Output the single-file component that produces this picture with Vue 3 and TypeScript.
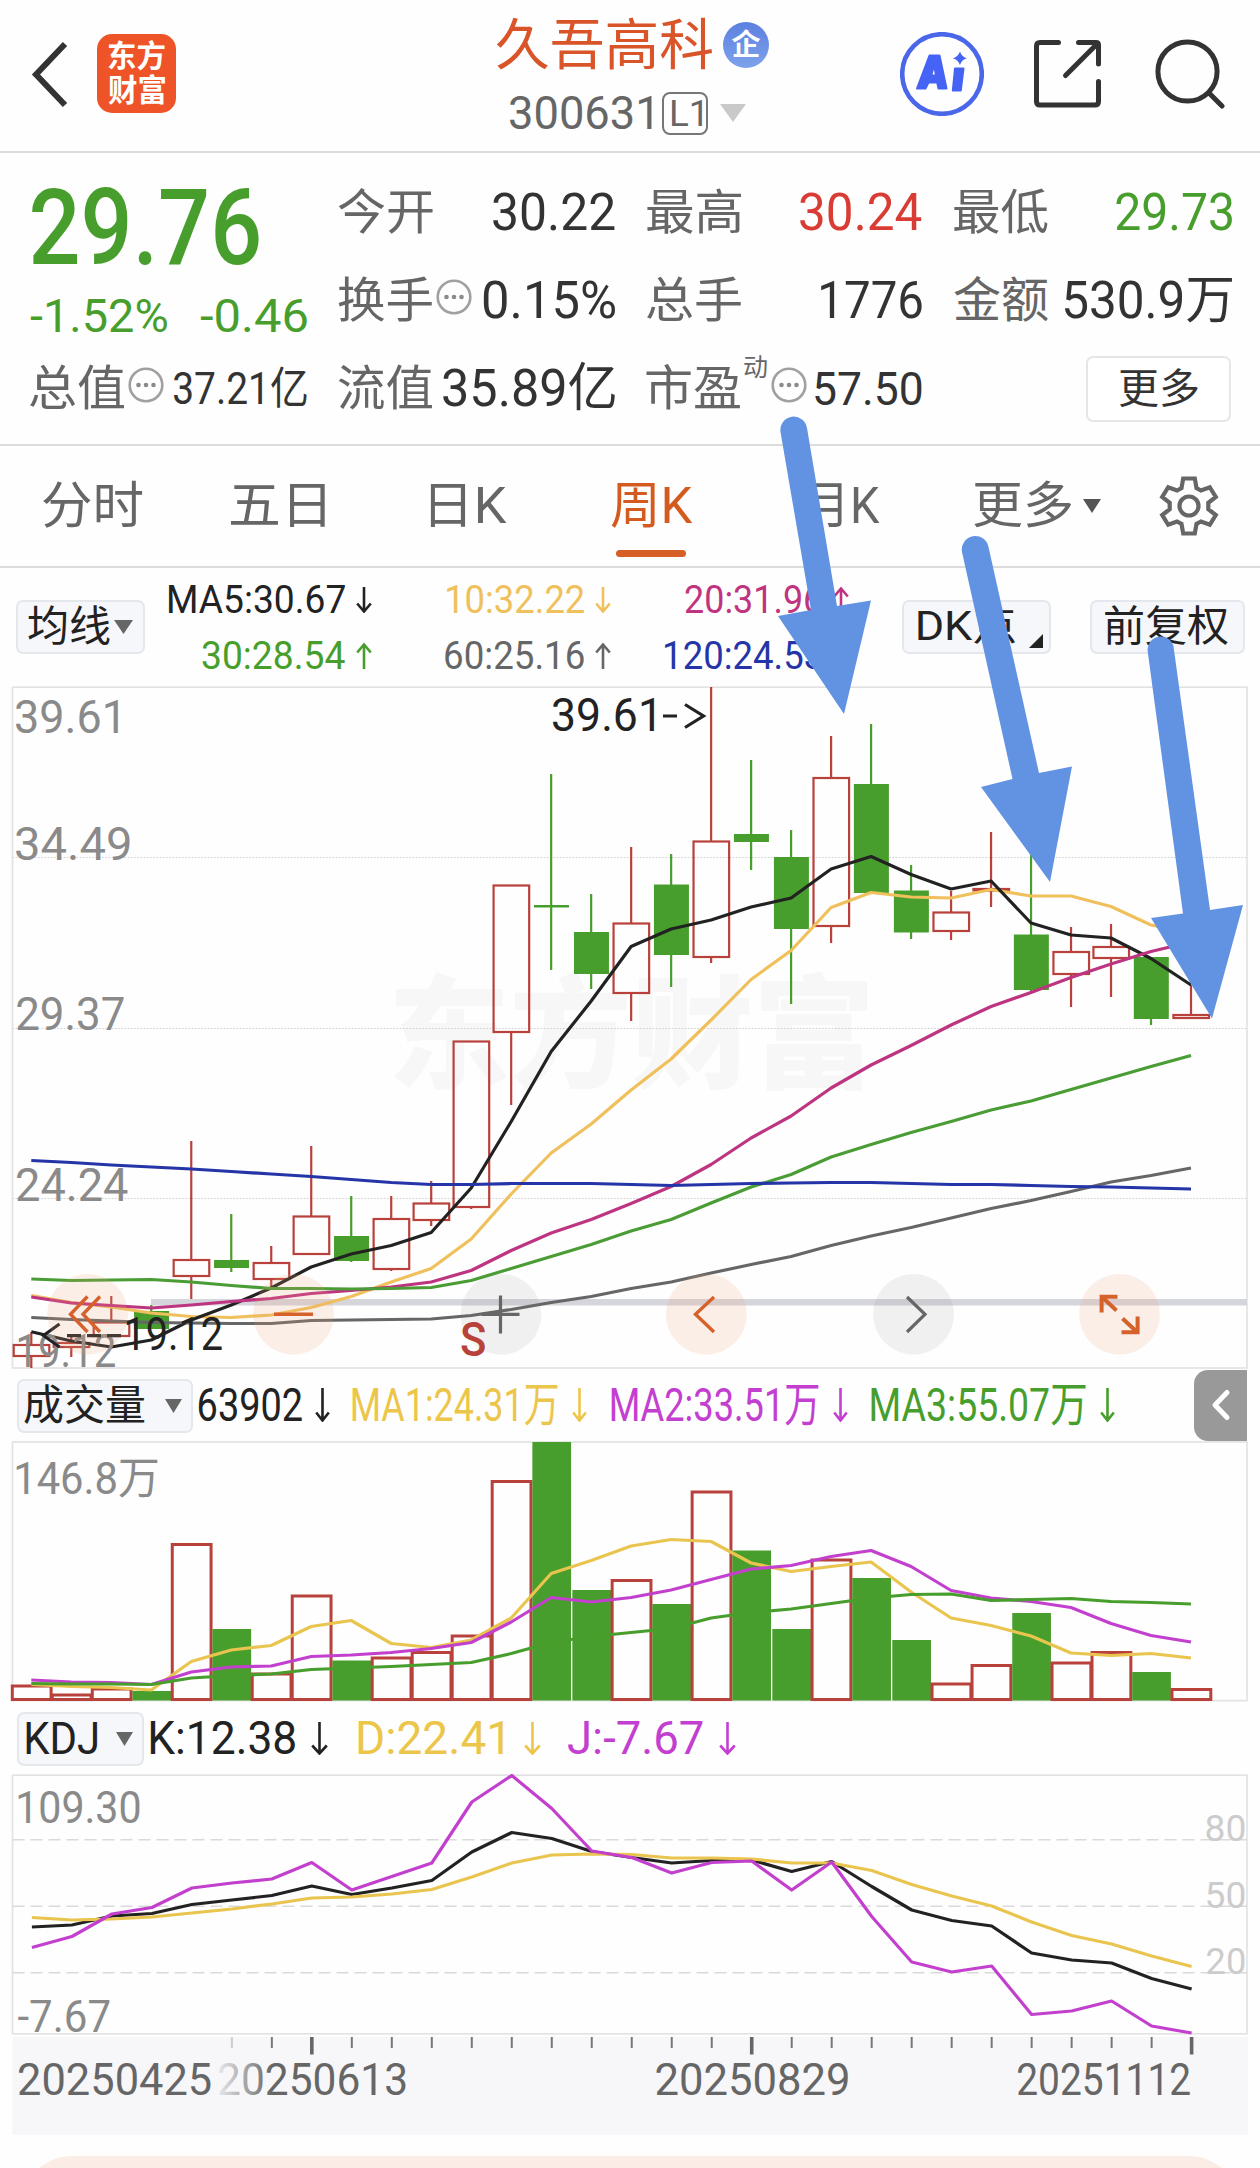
<script setup lang="ts">
import { h } from 'vue'
import type { Directive, FunctionalComponent } from 'vue'

/* ---------- text fitting: squeezes a label to a given ink width ---------- */
type Spot = { x: number; y: number; w: number }
const pen = document.createElement('canvas').getContext('2d')!

function ink(el: Element) {
  const cs = getComputedStyle(el)
  pen.font = `${cs.fontWeight} ${cs.fontSize} ${cs.fontFamily}`
  const m = pen.measureText((el.textContent ?? '').trim())
  return { left: m.actualBoundingBoxLeft, width: m.actualBoundingBoxLeft + m.actualBoundingBoxRight, advance: m.width }
}

const vFit: Directive<HTMLElement, number> = {
  mounted(el, { value }) {
    const m = ink(el)
    const s = value / m.width
    el.style.transform = `translateX(${m.left * s}px) scaleX(${s})`
    el.style.marginRight = `${value - m.advance}px`
  },
}

const vSpot: Directive<SVGTextElement, Spot> = {
  mounted(el, { value }) {
    const m = ink(el)
    const s = value.w / m.width
    el.setAttribute('transform', `translate(${value.x + m.left * s} ${value.y}) scale(${s} 1)`)
  },
}

/* ---------- small glyphs ---------- */
const Trend: FunctionalComponent<{ up?: boolean; w: number; t: number }> = (p) => {
  const m = p.w / 2
  const d = p.up
    ? `M${m} ${p.t}V1.5M1.2 9.5L${m} 1.5L${p.w - 1.2} 9.5`
    : `M${m} 0V${p.t - 1.5}M1.2 ${p.t - 9.5}L${m} ${p.t - 1.5}L${p.w - 1.2} ${p.t - 9.5}`
  return h('svg', { width: p.w, height: p.t, viewBox: `0 0 ${p.w} ${p.t}`, style: { flex: 'none' } }, [
    h('path', { d, fill: 'none', stroke: 'currentColor', 'stroke-width': 2.6 }),
  ])
}
Trend.props = { up: Boolean, w: Number, t: Number }

const Dots: FunctionalComponent = () =>
  h('svg', { width: 36, height: 36, viewBox: '0 0 36 36', style: { flex: 'none' } }, [
    h('circle', { cx: 18, cy: 18, r: 16.3, fill: 'none', stroke: '#a0a0a0', 'stroke-width': 2.6 }),
    ...[10.5, 18, 25.5].map((cx) => h('circle', { cx, cy: 18, r: 2.3, fill: '#8a8a8a' })),
  ])

/* ---------- chart data ---------- */
const X0 = 31.3
const STEP = 39.99
const cx = (i: number) => X0 + STEP * i
const line = (ys: number[], dx = 0) => ys.map((y, i) => `${(cx(i) + dx).toFixed(1)},${y}`).join(' ')

type Candle = [up: 0 | 1, top: number, bottom: number, high: number, low: number]
const candles: Candle[] = [
  [1, 1345, 1356, 1332, 1368], [1, 1343, 1347, 1337, 1357], [1, 1322.5, 1336, 1296, 1336], [0, 1311, 1329, 1305, 1329],
  [1, 1260, 1276, 1141, 1299], [0, 1260, 1268, 1214, 1272], [1, 1263, 1279, 1246, 1287], [1, 1216.5, 1254, 1146, 1254],
  [0, 1236, 1261, 1196, 1262], [1, 1219, 1269, 1196, 1271], [1, 1203.5, 1220, 1181, 1226], [1, 1041.5, 1207, 1041, 1209],
  [1, 885.5, 1032, 885, 1105], [0, 905, 907.5, 774, 970], [0, 932, 974, 894, 989], [1, 923.5, 993, 847, 1021],
  [0, 884.5, 955, 854, 987], [1, 841.5, 957, 687, 963], [0, 834, 842, 760, 870], [0, 857, 929, 830, 1004],
  [1, 778, 926, 736, 943], [0, 784, 893, 724, 893], [0, 890.5, 932.5, 865, 939], [1, 912.5, 931, 891, 940],
  [1, 889, 890.5, 832, 907], [0, 934.5, 990, 855, 992], [1, 952, 974, 927, 1007], [1, 947, 958, 924, 997],
  [0, 957, 1019, 957, 1025], [1, 1015, 1018, 985, 1018],
]

const averages = [
  { c: '#efc05c', y: [1295.5, 1302.5, 1307, 1313, 1316.5, 1317.5, 1315, 1307.5, 1296.5, 1282, 1268.5, 1239, 1194, 1153, 1124, 1090, 1059, 1020, 979.5, 950.5, 907.5, 892.5, 897, 898, 889.5, 896, 896, 906.5, 925, 933] },
  { c: '#222222', y: [1331.7, 1341, 1347, 1340, 1320, 1305, 1288, 1267, 1254, 1245.5, 1232.5, 1188, 1121.5, 1051.5, 1001, 946.5, 929, 920, 907, 898, 869, 856.5, 874.5, 889, 881, 923, 935, 938, 958.5, 985] },
  { c: '#bd3480', y: [1297, 1303, 1305.5, 1308, 1305, 1301.5, 1298.5, 1293.5, 1290.5, 1287, 1282, 1270.5, 1250.5, 1233, 1219.5, 1203.5, 1186.5, 1164.5, 1138, 1116, 1088, 1065, 1045.5, 1025, 1006.5, 992.5, 977.5, 964, 951.5, 942] },
  { c: '#4a9c35', y: [1279, 1280.5, 1280, 1279.5, 1282, 1285.5, 1288.5, 1288.5, 1289, 1288.5, 1287.5, 1280.5, 1268.5, 1256.5, 1244.5, 1231, 1219.5, 1203, 1187, 1174.5, 1157, 1144.5, 1132.5, 1121.5, 1110, 1101, 1089.5, 1078, 1066.5, 1055.5] },
  { c: '#666666', y: [1317.5, 1319.5, 1321, 1322.5, 1323, 1323.5, 1323.5, 1320.5, 1320, 1319.5, 1319, 1315.5, 1309.5, 1302.5, 1296.5, 1288.5, 1282, 1273, 1264.5, 1256.5, 1245.5, 1236, 1227.5, 1218, 1208.5, 1200.5, 1191.5, 1182, 1175.5, 1168] },
  { c: '#2535a8', y: [1160.5, 1162.5, 1165, 1167, 1169, 1171.5, 1174, 1176.5, 1179.5, 1182.5, 1184.5, 1184.5, 1183.5, 1183.5, 1183.5, 1184.5, 1185.5, 1184.5, 1183.5, 1183, 1182.5, 1182.5, 1183.5, 1184.5, 1184.5, 1185.5, 1186.5, 1187, 1188, 1189] },
]

const priceLabels = [
  { t: '39.61', x: 16, y: 732.5, w: 102 },
  { t: '34.49', x: 16, y: 859.5, w: 114 },
  { t: '29.37', x: 17, y: 1029.5, w: 107 },
  { t: '24.24', x: 17, y: 1201, w: 111 },
  { t: '19.12', x: 18, y: 1366.5, w: 97 },
]

const volumes: [up: 0 | 1, top: number][] = [
  [1, 1686], [1, 1695], [1, 1689], [0, 1691], [1, 1544.5], [0, 1629], [1, 1674], [1, 1596], [0, 1660.5], [1, 1658],
  [1, 1652.5], [1, 1636], [1, 1481.5], [0, 1442], [0, 1590], [1, 1580.5], [0, 1604], [1, 1492], [0, 1550.5], [0, 1629],
  [1, 1560], [0, 1578], [0, 1640], [1, 1684], [1, 1665.5], [0, 1613], [1, 1663], [1, 1652.5], [0, 1672], [1, 1689.5],
]
const volumeLines = [
  { c: '#e9c54f', y: [1684.5, 1686.5, 1687.5, 1690, 1661.5, 1650, 1645.5, 1626.5, 1620.5, 1643.5, 1647.5, 1640, 1618, 1573.5, 1560.5, 1546, 1539.5, 1541.5, 1563, 1571.5, 1566.5, 1562, 1592, 1618, 1625.5, 1636, 1653, 1655.5, 1653.5, 1658] },
  { c: '#c240cd', y: [1680, 1682, 1682.5, 1684.5, 1672, 1667, 1666, 1656.5, 1655, 1652.5, 1648.5, 1642.5, 1622, 1597.5, 1602, 1597.5, 1590, 1579.5, 1569, 1565.5, 1556.5, 1550.5, 1566.5, 1590.5, 1598, 1601.5, 1607.5, 1623.5, 1635.5, 1642] },
  { c: '#489e2c', y: [1683.5, 1684, 1684, 1684.5, 1678, 1675.5, 1674, 1669.5, 1668, 1666.5, 1664.5, 1662.5, 1653.5, 1642.5, 1636.5, 1632.5, 1628.5, 1618, 1612.5, 1609, 1603.5, 1598, 1594.5, 1594, 1600.5, 1599.5, 1598.5, 1601.5, 1602.5, 1604] },
]

const kdjLines = [
  { c: '#222222', y: [1927, 1925, 1916, 1913.5, 1904.5, 1900, 1895.5, 1886, 1894.5, 1888, 1880.5, 1852, 1832.5, 1838.5, 1851.5, 1857.5, 1863, 1860.5, 1860, 1871.5, 1861.5, 1886.5, 1910, 1920.5, 1926, 1953, 1960, 1963, 1978.5, 1989] },
  { c: '#e9c54f', y: [1917.5, 1920, 1919, 1917, 1913, 1909, 1904, 1898, 1897, 1894, 1889.5, 1877, 1863, 1855, 1854, 1854.5, 1858, 1858, 1859, 1863, 1863, 1870.5, 1884.5, 1896, 1906, 1922, 1935.5, 1944, 1956, 1966.5] },
  { c: '#c240cd', y: [1947.5, 1936.5, 1914, 1907.5, 1888, 1883, 1879, 1862.5, 1890, 1876.5, 1863, 1802, 1775.5, 1808.5, 1851, 1857.5, 1873, 1862.5, 1861, 1890, 1862, 1916.5, 1962, 1972, 1966, 2014.5, 2011, 2001, 2026, 2033] },
]
const kdjGuides = [
  { t: '80', y: 1839.7, b: 1841 },
  { t: '50', y: 1906.3, b: 1907.5 },
  { t: '20', y: 1972.7, b: 1974 },
]

const ticks = Array.from({ length: 25 }, (_, k) => k + 5)
const major = (i: number) => i === 7 || i === 18 || i === 29

const legend = [
  { t: 'MA5:30.67', w: 176, c: 'ink', up: false },
  { t: '10:32.22', w: 137, c: 'amber', up: false },
  { t: '20:31.96', w: 137, c: 'magenta', up: true },
  { t: '30:28.54', w: 143, c: 'green', up: true },
  { t: '60:25.16', w: 139, c: 'grey', up: true },
  { t: '120:24.53', w: 157, c: 'blue', up: false },
]
</script>

<template>
  <div class="screen">
    <header class="top">
      <div class="brand">
        <svg width="48" height="72" viewBox="0 0 48 72"><path d="M36 6L7 36.5L36 67" fill="none" stroke="#333" stroke-width="6" /></svg>
        <div class="logo"><span v-fit="57">东方</span><span v-fit="57">财富</span></div>
      </div>
      <div class="title">
        <div class="name">
          <span v-fit="217">久吾高科</span>
          <i class="badge">企</i>
        </div>
        <div class="code">
          <span v-fit="142">300631</span>
          <b class="level"><span v-fit="31">L1</span></b>
          <svg width="26" height="18" viewBox="0 0 26 18"><path d="M0 0H26L13 18Z" fill="#c9c9c9" /></svg>
        </div>
      </div>
      <div class="actions">
        <svg width="84" height="84" viewBox="0 0 84 84">
          <circle cx="42" cy="42" r="39.8" fill="none" stroke="#4a67ea" stroke-width="4.6" />
          <path fill="#4563f5" stroke="#4563f5" stroke-width="2" stroke-linejoin="round" fill-rule="evenodd" d="M29.5 23.5H39.5L46.5 56.5H38.5L37.2 50.5H28.5L25.5 56.5H17ZM34.2 33L31.2 43.5H36Z" />
          <path fill="#4563f5" stroke="#4563f5" stroke-width="2" stroke-linejoin="round" d="M55 36.5H63.5L60.8 58.5H52.8Z" />
          <path fill="#4563f5" d="M60 19.5Q61.5 24.5 66.8 26.2Q61.5 28 60 33Q58.2 28 53 26.2Q58.2 24.5 60 19.5Z" />
        </svg>
        <svg width="68" height="68" viewBox="0 0 68 68" fill="none" stroke="#333" stroke-width="5" stroke-linecap="round">
          <path d="M24.5 2.5H6Q2.5 2.5 2.5 6V61.5Q2.5 65 6 65H61Q64.5 65 64.5 61.5V41.5" />
          <path d="M44.5 2.5H62Q64.5 2.5 64.5 5V24M63 4L31.5 35.5" />
        </svg>
        <svg width="70" height="70" viewBox="0 0 70 70" fill="none" stroke="#333" stroke-width="5" stroke-linecap="round">
          <circle cx="32.5" cy="32.5" r="29.6" /><path d="M54 54L67 67" />
        </svg>
      </div>
    </header>

    <section class="quote">
      <div class="upper">
        <div class="price">
          <strong><span v-fit="227">29.76</span></strong>
          <div class="change"><span v-fit="137">-1.52%</span><span v-fit="107">-0.46</span></div>
        </div>
        <dl class="cells">
          <div><dt v-fit="95">今开</dt><dd v-fit="122">30.22</dd></div>
          <div><dt v-fit="94">最高</dt><dd v-fit="122" class="red">30.24</dd></div>
          <div><dt v-fit="94">最低</dt><dd v-fit="116" class="green">29.73</dd></div>
          <div><dt v-fit="94">换手</dt><Dots class="dots" /><dd v-fit="132">0.15%</dd></div>
          <div><dt v-fit="94">总手</dt><dd v-fit="101">1776</dd></div>
          <div><dt v-fit="94">金额</dt><dd v-fit="168">530.9万</dd></div>
        </dl>
      </div>
      <dl class="lower">
        <div><dt v-fit="94">总值</dt><Dots class="dots" /><dd v-fit="133" class="s44">37.21亿</dd></div>
        <div><dt v-fit="94">流值</dt><dd v-fit="172">35.89亿</dd></div>
        <div><dt v-fit="94">市盈</dt><sup v-fit="23">动</sup><Dots class="dots" /><dd v-fit="107" class="s46">57.50</dd></div>
        <div class="end"><button class="more"><span v-fit="79">更多</span></button></div>
      </dl>
    </section>

    <nav class="tabs">
      <span style="margin-left: 43px"><b v-fit="100">分时</b></span>
      <span style="margin-left: 87px"><b v-fit="95">五日</b></span>
      <span style="margin-left: 105px"><b v-fit="77">日K</b></span>
      <span class="on" style="margin-left: 104px"><b v-fit="82">周K</b></span>
      <span style="margin-left: 111px"><b v-fit="76">月K</b></span>
      <span style="margin-left: 94px"><b v-fit="98">更多</b></span>
      <svg class="drop" width="18" height="14" viewBox="0 0 18 14"><path d="M0 0H18L9 14Z" fill="#555" /></svg>
      <svg class="gear" width="60" height="60" viewBox="-30 -30 60 60" fill="none" stroke="#666" stroke-width="4.2">
        <path d="M-5.8 -27.5H5.8L7.5 -17.8L12 -15.5L20.8 -18.8L26.8 -9L19.3 -3.2V3.2L26.8 9L20.8 18.8L12 15.5L7.5 17.8L5.8 27.5H-5.8L-7.5 17.8L-12 15.5L-20.8 18.8L-26.8 9L-19.3 3.2V-3.2L-26.8 -9L-20.8 -18.8L-12 -15.5L-7.5 -17.8Z" />
        <circle r="9.5" />
      </svg>
    </nav>

    <section class="legend">
      <button class="pick ma"><span v-fit="82">均线</span><svg width="19" height="14" viewBox="0 0 19 14"><path d="M0 0H19L9.5 14Z" fill="#666" /></svg></button>
      <div class="values">
        <div v-for="l in legend" :key="l.t" :class="l.c"><span v-fit="l.w">{{ l.t }}</span><Trend :up="l.up" :w="16" :t="26" /></div>
      </div>
      <button class="pick dk"><span v-fit="98">DK点</span><svg width="14" height="14" viewBox="0 0 14 14"><path d="M14 0V14H0Z" fill="#222" /></svg></button>
      <button class="pick fq"><span v-fit="123">前复权</span></button>
    </section>

    <svg class="chart" width="1260" height="683" viewBox="0 686 1260 683">
      <text v-spot="{ x: 394, y: 1078, w: 474 }" class="mark">东方财富</text>
      <path d="M12.5 857.5H1247M12.5 1028.5H1247M12.5 1198.5H1247" stroke="#cfcfcf" stroke-width="1" stroke-dasharray="1.6 1.6" />
      <rect x="12.5" y="687.2" width="1234.5" height="680.8" fill="none" stroke="#e2e2e2" stroke-width="1.6" />
      <rect x="151" y="1299" width="1096" height="6.5" fill="#d5d5dc" />
      <g v-for="(k, i) in candles" :key="i">
        <template v-if="k[0]">
          <path :d="`M${cx(i)} ${k[3]}V${k[1]}M${cx(i)} ${k[2]}V${k[4]}`" stroke="#b8423b" stroke-width="2.2" />
          <rect :x="cx(i) - 17.6" :y="k[1]" width="35.6" :height="k[2] - k[1]" fill="none" stroke="#b8423b" stroke-width="2.2" />
        </template>
        <template v-else>
          <path :d="`M${cx(i)} ${k[3]}V${k[4]}`" stroke="#489e2c" stroke-width="2.2" />
          <rect :x="cx(i) - 17.2" :y="k[1]" width="35" :height="k[2] - k[1]" fill="#489e2c" />
        </template>
      </g>
      <polyline v-for="m in averages" :key="m.c" :points="line(m.y)" fill="none" :stroke="m.c" stroke-width="3.2" stroke-linejoin="round" />
      <g class="axis"><text v-for="p in priceLabels" :key="p.t" v-spot="p">{{ p.t }}</text></g>
      <g class="note">
        <text v-spot="{ x: 553, y: 730.5, w: 101 }">39.61</text>
        <text v-spot="{ x: 126, y: 1349.5, w: 96 }">19.12</text>
      </g>
      <path d="M663 716H677M685 704.5L703.5 716L685 727.5M59.5 1324L43.5 1335.5L59.5 1347M67 1335.7H81M87 1335.7H101M107 1335.7H121" fill="none" stroke="#222" stroke-width="3.2" />
      <g>
        <circle v-for="x in [87.6, 293.5, 706.3, 1119.5]" :key="x" :cx="x" cy="1314.3" r="40.4" fill="#f0a47a" fill-opacity="0.18" />
        <circle v-for="x in [501, 913.5]" :key="x" :cx="x" cy="1314.3" r="40.4" fill="#808080" fill-opacity="0.11" />
      </g>
      <g fill="none" stroke="#d5622a" stroke-width="3.4">
        <path d="M87.5 1296.5L70.5 1314.3L87.5 1332M100 1296.5L83 1314.3L100 1332M274 1314.3H313M714 1297L695.5 1314.3L714 1332" />
        <path d="M1117.5 1296.8H1101.6V1312.5M1102 1297L1116.5 1310.5M1121.5 1332.3H1137.6V1316.5M1137 1332L1122.5 1318.5" stroke-width="4" />
      </g>
      <path d="M481.500 1314.3H519.5M500.500 1295.5V1333.500M907 1297L925 1314.3L907 1332" fill="none" stroke="#666" stroke-width="3.2" />
      <text v-spot="{ x: 461, y: 1356, w: 24.5 }" class="sell">S</text>
    </svg>

    <section class="bar vol">
      <button class="pick"><span v-fit="121">成交量</span><svg width="17" height="14" viewBox="0 0 17 14"><path d="M0 0H17L8.500 14Z" fill="#666" /></svg></button>
      <span v-fit="103" class="first ink">63902</span><Trend :w="15" :t="34" class="ink a1" />
      <span v-fit="206" class="yellow m1">MA1:24.31万</span><Trend :w="15" :t="34" class="yellow a2" />
      <span v-fit="208" class="purple m2">MA2:33.51万</span><Trend :w="15" :t="34" class="purple a2" />
      <span v-fit="215" class="green m3">MA3:55.07万</span><Trend :w="15" :t="34" class="green a2" />
      <button class="fold"><svg width="20" height="34" viewBox="0 0 20 34"><path d="M16 4.500L4 17L16 29.500" fill="none" stroke="#fff" stroke-width="5" stroke-linecap="round" stroke-linejoin="round" /></svg></button>
    </section>

    <svg class="chart" width="1260" height="261" viewBox="0 1441 1260 261">
      <rect x="12.5" y="1442" width="1234.5" height="258.6" fill="none" stroke="#e2e2e2" stroke-width="1.6" />
      <template v-for="(v, i) in volumes" :key="i">
        <rect v-if="v[0]" :x="cx(i) - 19" :y="v[1]" width="38.800" :height="1699.500 - v[1]" fill="none" stroke="#b8423b" stroke-width="3" />
        <rect v-else :x="cx(i) - 18.8" :y="v[1]" width="38.700" :height="1700.500 - v[1]" fill="#489e2c" />
      </template>
      <polyline v-for="m in volumeLines" :key="m.c" :points="line(m.y)" fill="none" :stroke="m.c" stroke-width="3.2" stroke-linejoin="round" />
      <text v-spot="{ x: 16, y: 1494, w: 142 }" class="sub">146.8万</text>
    </svg>

    <section class="bar kdj">
      <button class="pick"><span v-fit="71">KDJ</span><svg width="17" height="14" viewBox="0 0 17 14"><path d="M0 0H17L8.500 14Z" fill="#666" /></svg></button>
      <span v-fit="145" class="k ink">K:12.38</span><Trend :w="17" :t="33" class="ink ka" />
      <span v-fit="145" class="d yellow">D:22.41</span><Trend :w="17" :t="33" class="yellow da" />
      <span v-fit="135" class="j purple">J:-7.67</span><Trend :w="17" :t="33" class="purple ka" />
    </section>

    <svg class="chart" width="1260" height="263" viewBox="0 1774 1260 263">
      <rect x="12.5" y="1775.200" width="1234.5" height="258.600" fill="none" stroke="#e2e2e2" stroke-width="1.6" />
      <g v-for="g in kdjGuides" :key="g.t">
        <path :d="`M12.5 ${g.y}H1247`" stroke="#dadada" stroke-width="1.6" stroke-dasharray="12 6" />
        <text v-spot="{ x: 1206.500, y: g.b, w: 38 }" class="guide">{{ g.t }}</text>
      </g>
      <text v-spot="{ x: 18, y: 1822.500, w: 122 }" class="sub">109.30</text>
      <text v-spot="{ x: 17.500, y: 2031.500, w: 92 }" class="sub">-7.67</text>
      <polyline v-for="m in kdjLines" :key="m.c" :points="line(m.y, 0.6)" fill="none" :stroke="m.c" stroke-width="3.2" stroke-linejoin="round" />
    </svg>

    <svg class="chart" width="1260" height="98" viewBox="0 2037 1260 98">
      <defs>
        <linearGradient id="fade" gradientUnits="userSpaceOnUse" x1="212" y1="0" x2="272" y2="0">
          <stop offset="0" stop-color="#f7f7fa" /><stop offset="1" stop-color="#f7f7fa" stop-opacity="0" />
        </linearGradient>
      </defs>
      <rect x="12.5" y="2037" width="1235.500" height="98" fill="#f7f7fa" />
      <path v-for="i in ticks" :key="i" :d="`M${cx(i) + 0.6} 2037V${major(i) ? 2054.500 : 2048}`" :stroke="major(i) ? '#666' : '#777'" :stroke-width="major(i) ? 3.6 : 2" />
      <text v-spot="{ x: 219, y: 2095, w: 187 }" class="date">20250613</text>
      <rect x="212" y="2037" width="60" height="98" fill="url(#fade)" />
      <text v-spot="{ x: 19, y: 2095, w: 192 }" class="date">20250425</text>
      <text v-spot="{ x: 656.500, y: 2095, w: 192 }" class="date">20250829</text>
      <text v-spot="{ x: 1018, y: 2095, w: 172 }" class="date">20251112</text>
    </svg>

    <div class="sheet"></div>

    <svg class="pointers" width="1260" height="2168" viewBox="0 0 1260 2168" fill="#6293e2">
      <path d="M780.500 432A13.300 13.300 0 0 1 807 428L837 606L871 600.500L844 714L778 616L811 610Z" />
      <path d="M962 552A13.300 13.300 0 0 1 988.500 547L1039 773L1072 766.500L1050 882L981 787L1012.500 779Z" />
      <path d="M1147.500 650A13.200 13.200 0 0 1 1173.500 646.500L1210 910L1243 905L1212 1018.500L1151 918L1183 913.500Z" />
    </svg>
  </div>
</template>

<style>
body {
  margin: 0;
  background: #fefefe;
}
</style>

<style scoped>
.screen {
  position: relative;
  width: 1260px;
  height: 2168px;
  overflow: hidden;
  background: #fefefe;
  color: #333;
  font-family: Roboto, 'Noto Sans CJK SC', sans-serif;
  white-space: nowrap;
}
.screen span,
.screen b,
.screen dt,
.screen dd,
.screen sup {
  display: inline-block;
  flex: none;
  transform-origin: 0 50%;
}
b, i { font-weight: 400; font-style: normal; }
dl, dd { margin: 0; }
button { padding: 0; font-family: inherit; }
svg { display: block; flex: none; }

.ink { color: #222; }
.amber { color: #efc05c; }
.yellow { color: #ecc64a; }
.magenta { color: #c0337f; }
.purple { color: #c33fd0; }
.green, .cells .green { color: #489e2c; }
.cells .red { color: #d83c34; }
.grey { color: #666; }
.blue { color: #2535a8; }

.top {
  display: flex;
  box-sizing: border-box;
  height: 153px;
  border-bottom: 2px solid #dcdcdc;
}
.brand {
  display: flex;
  align-items: center;
  width: 496px;
  height: 147px;
  padding-left: 29px;
  box-sizing: border-box;
}
.logo {
  display: flex;
  flex-direction: column;
  align-items: flex-start;
  justify-content: center;
  box-sizing: border-box;
  width: 79px;
  height: 79px;
  margin-left: 20px;
  padding-left: 11px;
  border-radius: 15px;
  background: #ee5427;
  color: #fff;
  font-size: 31px;
  font-weight: 700;
  line-height: 34px;
}
.title { width: 405px; }
.name {
  display: flex;
  align-items: center;
  height: 90px;
  font-size: 55px;
  line-height: 90px;
  color: #d95529;
}
.badge {
  width: 46px;
  height: 46px;
  margin-left: 10px;
  border-radius: 50%;
  background: linear-gradient(#5c80e0, #7ea2ea);
  color: #fff;
  font-size: 29px;
  font-weight: 700;
  line-height: 47px;
  text-align: center;
}
.code {
  display: flex;
  align-items: center;
  height: 46px;
  padding-left: 14px;
  font-size: 46px;
  line-height: 46px;
  color: #666;
}
.level {
  box-sizing: border-box;
  width: 46px;
  height: 43px;
  margin: 0 12px 0 10px;
  padding-left: 7px;
  border: 2px solid #777;
  border-radius: 8px;
  font-size: 36px;
  line-height: 40px;
}
.actions {
  display: flex;
  align-items: center;
  height: 147px;
}
.actions svg:nth-child(1) { margin-left: -1px; }
.actions svg:nth-child(2) { margin-left: 50px; }
.actions svg:nth-child(3) { margin-left: 53px; }

.quote {
  box-sizing: border-box;
  height: 293px;
  padding: 16px 0 0 30px;
  border-bottom: 2px solid #dcdcdc;
}
.upper { display: flex; height: 176px; }
.price { width: 308px; color: #489e2c; }
.price strong {
  display: block;
  height: 119px;
  padding-left: 2px;
  font-size: 105px;
  font-weight: 500;
  line-height: 119px;
}
.change {
  display: flex;
  justify-content: space-between;
  width: 277px;
  font-size: 46px;
  line-height: 56px;
}
.cells {
  display: grid;
  grid-template-columns: 277px 275px 278px;
  grid-auto-rows: 88px;
  column-gap: 32px;
}
.cells div, .lower div {
  display: flex;
  align-items: center;
  height: 88px;
}
dt { font-size: 48px; line-height: 88px; color: #666; }
dd { font-size: 52px; line-height: 88px; color: #333; }
.screen .cells dd, .screen .lower dd { position: relative; }
dt + dd { order: 2; }
.cells div, .lower div { justify-content: space-between; }
.lower {
  display: grid;
  grid-template-columns: 277px 277px 276px 278px;
  column-gap: 31px;
}
.dots { margin: 0 auto 8px 4px; }
.s44 { font-size: 44px; }
.s46 { font-size: 46px; }
sup {
  align-self: flex-start;
  margin-left: 4px;
  font-size: 25px;
  line-height: 46px;
  color: #666;
}
.lower .end { justify-content: flex-end; }
.more {
  width: 145px;
  height: 66px;
  border: 2px solid #e6e6e6;
  border-radius: 7px;
  background: #fff;
  color: #333;
  font-size: 41px;
  line-height: 58px;
}

.tabs {
  display: flex;
  align-items: center;
  box-sizing: border-box;
  height: 122px;
  border-bottom: 2px solid #dcdcdc;
  font-size: 50px;
  line-height: 120px;
  color: #666;
}
.tabs .on { position: relative; color: #d45b20; }
.tabs .on::after {
  content: '';
  position: absolute;
  left: 5px;
  bottom: 9px;
  width: 70px;
  height: 7px;
  border-radius: 4px;
  background: #d65f28;
}
.drop { margin-left: 11px; }
.gear { margin-left: 58px; }

.legend {
  display: flex;
  height: 118px;
  padding-left: 16px;
}
.pick {
  display: flex;
  align-items: center;
  box-sizing: border-box;
  flex: none;
  height: 54px;
  border: 2px solid #e4e7ec;
  border-radius: 7px;
  background: #f6f7fa;
  color: #222;
  font-size: 42px;
  line-height: 48px;
}
.legend .pick { margin-top: 32px; }
.ma { width: 129px; padding-left: 10px; }
.ma svg { margin-left: 4px; }
.values {
  display: grid;
  grid-template-columns: 227px 239px 238px;
  grid-auto-rows: 56px;
  padding-top: 4px;
  font-size: 38px;
}
.values div {
  display: flex;
  align-items: center;
  justify-content: flex-end;
  gap: 11px;
  line-height: 56px;
}
.dk { width: 149px; margin-left: 53px; padding-left: 14px; font-size: 40px; }
.dk svg { align-self: flex-end; margin: 0 0 4px 13px; }
.fq { width: 155px; margin-left: 39px; padding-left: 13px; font-size: 42px; }

.mark {
  font-size: 122px;
  font-weight: 900;
  fill: #f7f7f7;
}
.axis { font-size: 47px; fill: #8a8a8a; }
.note { font-size: 47px; fill: #222; }
.sub { font-size: 44px; fill: #8a8a8a; }
.guide { font-size: 37px; fill: #ccc; }
.date { font-size: 45px; fill: #666; }
.sell { font-size: 48px; font-weight: 500; fill: #b8413a; }

.bar {
  display: flex;
  align-items: center;
  font-size: 47px;
  padding-left: 17px;
}
.vol { height: 72px; line-height: 72px; }
.vol .pick { width: 176px; padding-left: 5px; margin-top: 1px; justify-content: space-between; padding-right: 9px; }
.first { margin-left: 6px; }
.a1 { margin-left: 13px; }
.a2 { margin-left: 14px; }
.m1 { margin-left: 22px; }
.m2 { margin-left: 24px; }
.m3 { margin-left: 23px; }
.fold {
  display: flex;
  align-items: center;
  width: 53px;
  height: 71px;
  margin-left: 79px;
  padding-left: 17px;
  border: 0;
  border-radius: 14px 0 0 14px;
  background: #999;
}
.kdj { height: 72px; line-height: 72px; }
.kdj .pick { width: 127px; padding: 0 9px 0 7px; justify-content: space-between; margin-top: 2px; font-size: 44px; }
.k { margin-left: 6px; }
.ka { margin-left: 16px; }
.d { margin-left: 30px; }
.da { margin-left: 21px; }
.j { margin-left: 27px; }

.sheet {
  width: 1219px;
  height: 110px;
  margin: 21px 0 0 21px;
  border-radius: 51px;
  background: #fbede6;
}
.pointers { position: absolute; left: 0; top: 0; pointer-events: none; }
</style>
